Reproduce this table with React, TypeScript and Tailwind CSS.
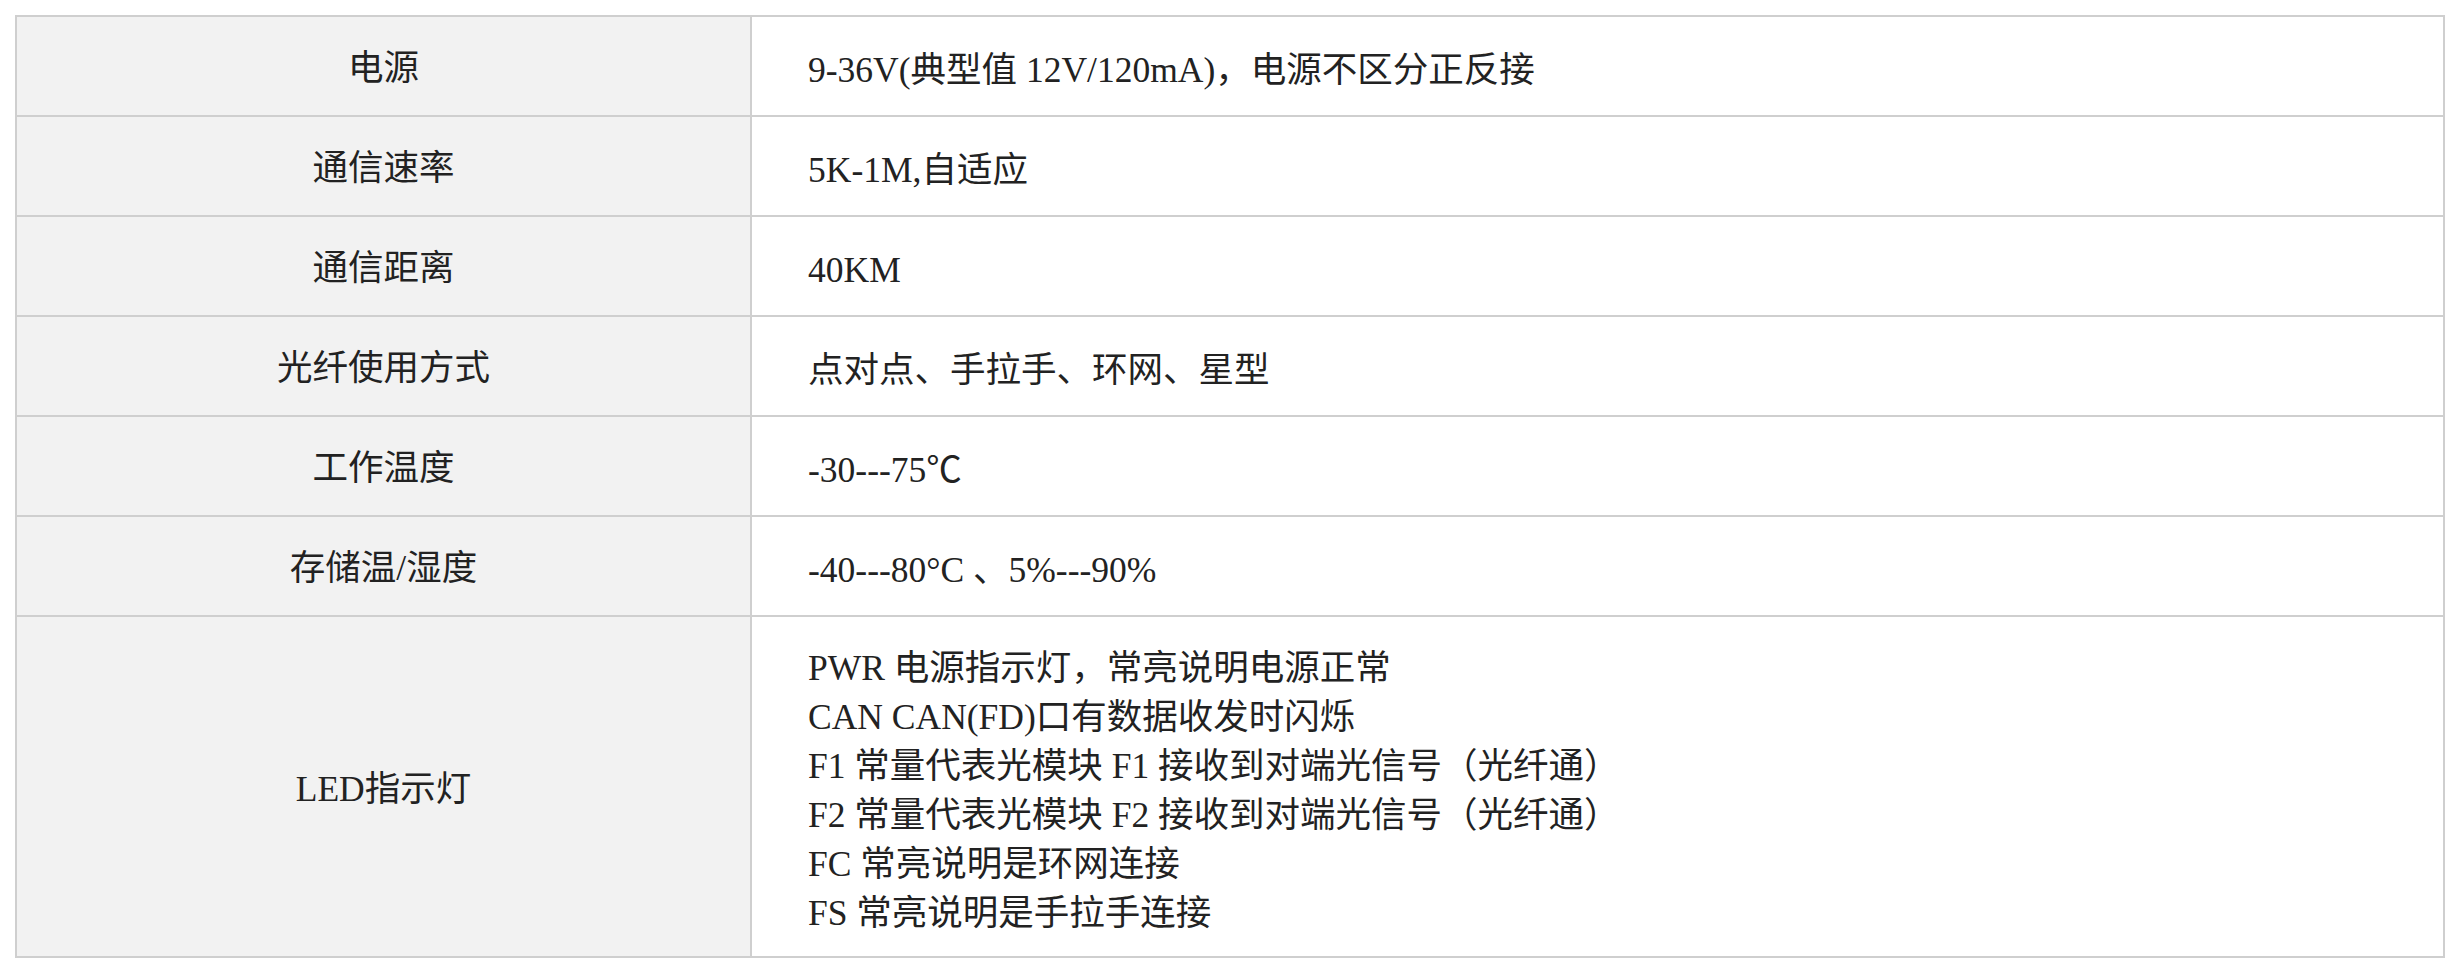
const ROWS: { label: string; value: string[] }[] = [
  { label: "电源", value: ["9-36V(典型值 12V/120mA)，电源不区分正反接"] },
  { label: "通信速率", value: ["5K-1M,自适应"] },
  { label: "通信距离", value: ["40KM"] },
  { label: "光纤使用方式", value: ["点对点、手拉手、环网、星型"] },
  { label: "工作温度", value: ["-30---75℃"] },
  { label: "存储温/湿度", value: ["-40---80°C 、5%---90%"] },
  {
    label: "LED指示灯",
    value: [
      "PWR 电源指示灯，常亮说明电源正常",
      "CAN CAN(FD)口有数据收发时闪烁",
      "F1 常量代表光模块 F1 接收到对端光信号（光纤通）",
      "F2 常量代表光模块 F2 接收到对端光信号（光纤通）",
      "FC 常亮说明是环网连接",
      "FS 常亮说明是手拉手连接",
    ],
  },
];

export default function App() {
  return (
    <div
      className="min-h-screen bg-white px-[15px] pt-[15px] text-[#222]"
      style={{ fontFamily: '"Liberation Serif", "Noto Sans CJK SC", serif' }}
    >
      <table className="w-full border-collapse border-2 border-[#cfcfcf] text-[35.5px]">
        <tbody>
          {ROWS.map((r) => {
            const multi = r.value.length > 1;
            return (
              <tr key={r.label} className={multi ? "h-[341px]" : "h-[100px]"}>
                <td className="w-[735px] border-2 border-[#cfcfcf] bg-[#f2f2f2] pt-[5px] text-center align-middle leading-[49px]">
                  {r.label}
                </td>
                <td className="border-2 border-[#cfcfcf] pl-[56px] pt-[8px] align-middle leading-[49px]">
                  {r.value.map((line) => (
                    <div key={line}>{line}</div>
                  ))}
                </td>
              </tr>
            );
          })}
        </tbody>
      </table>
    </div>
  );
}
